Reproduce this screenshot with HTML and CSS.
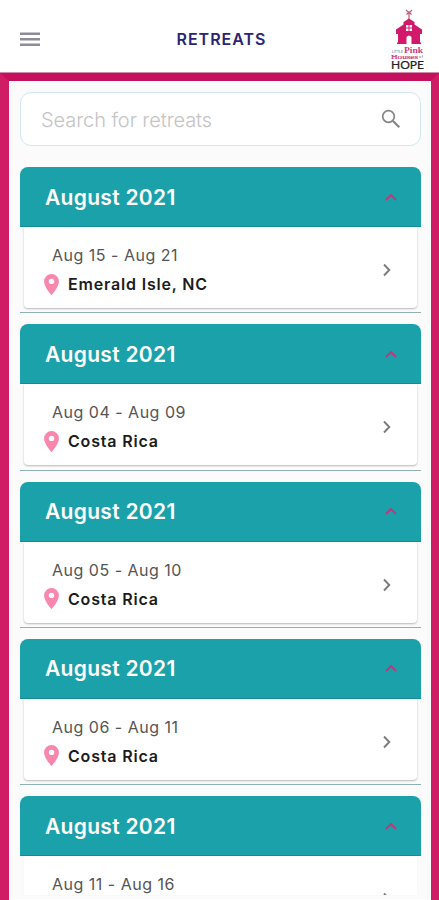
FILE: index.html
```html
<!DOCTYPE html>
<html lang="en">
<head>
<meta charset="utf-8">
<title>Retreats</title>
<link rel="stylesheet" href="styles.css">
</head>
<body>
<svg class="defs" width="0" height="0">
  <symbol id="up" viewBox="0 0 12 8"><path d="M1 7 6 2l5 5" fill="none" stroke="#c73378" stroke-width="1.8"/></symbol>
  <symbol id="next" viewBox="0 0 8 14"><path d="m1 1.500 5.300 5.500L1 12.500" fill="none" stroke="#7b7b7b" stroke-width="1.900"/></symbol>
  <symbol id="pin" viewBox="0 0 15 21"><path fill="#f886ad" fill-rule="evenodd" d="M7.500 0A7.400 7.400 0 0 0 .1 7.400C.1 13 7.500 21 7.500 21s7.400-8 7.400-13.600A7.400 7.400 0 0 0 7.500 0Zm0 4.700a2.700 2.700 0 1 1 0 5.400 2.700 2.700 0 0 1 0-5.400Z"/></symbol>
</svg>
<header class="bar">
  <svg class="menu" viewBox="0 0 20 15"><path d="M0 1.700h20M0 7.200h20M0 12.700h20" stroke="#8d8c98" stroke-width="2.600"/></svg>
  <h1 class="title">RETREATS</h1>
  <svg class="logo" viewBox="0 0 36 62">
    <path d="m15 2 3 3 3-3M15.500 6.500 18 4l2.500 2.500M18 4v7" fill="none" stroke="#bf5c83" stroke-width="1.200"/>
    <path fill="#d2196a" fill-rule="evenodd" d="M18 10.500 12.500 14v2.500L5 21.500V26h2v8.500H6V36h9.500v-7q2.500-3 5 0v7H30v-1.500h-1V26h2v-4.500l-7.500-5V14ZM15 17h6v6h-6Z"/>
    <path d="M18 17v6M15 20h6" stroke="#d2196a" stroke-width="1"/>
    <text class="l-small" x="1" y="44.500" textLength="11" lengthAdjust="spacingAndGlyphs">LITTLE</text>
    <text class="l-pink" x="13" y="44.500" textLength="19" lengthAdjust="spacingAndGlyphs">Pink</text>
    <text class="l-houses" x="0" y="50.500" textLength="27" lengthAdjust="spacingAndGlyphs">Houses</text>
    <text class="l-small" x="28" y="50" textLength="4">of</text>
    <text class="l-hope" x="0" y="60.500" textLength="33" lengthAdjust="spacingAndGlyphs">HOPE</text>
  </svg>
</header>
<main class="frame">
  <div class="search"><span>Search for retreats</span>
    <svg viewBox="0 0 20 20"><circle cx="7.500" cy="7.500" r="5.800" fill="none" stroke="#858585" stroke-width="1.700"/><path d="m12 12 6.300 6.300" stroke="#858585" stroke-width="2.100"/></svg>
  </div>
  <section class="group">
    <h2 class="month"><span>August 2021</span><svg class="up"><use href="#up"/></svg></h2>
    <div class="card"><div><p class="dates">Aug 15 - Aug 21</p><p class="place"><svg class="pin"><use href="#pin"/></svg><span>Emerald Isle, NC</span></p></div><svg class="next"><use href="#next"/></svg></div>
  </section>
  <section class="group">
    <h2 class="month"><span>August 2021</span><svg class="up"><use href="#up"/></svg></h2>
    <div class="card"><div><p class="dates">Aug 04 - Aug 09</p><p class="place"><svg class="pin"><use href="#pin"/></svg><span>Costa Rica</span></p></div><svg class="next"><use href="#next"/></svg></div>
  </section>
  <section class="group">
    <h2 class="month"><span>August 2021</span><svg class="up"><use href="#up"/></svg></h2>
    <div class="card"><div><p class="dates">Aug 05 - Aug 10</p><p class="place"><svg class="pin"><use href="#pin"/></svg><span>Costa Rica</span></p></div><svg class="next"><use href="#next"/></svg></div>
  </section>
  <section class="group">
    <h2 class="month"><span>August 2021</span><svg class="up"><use href="#up"/></svg></h2>
    <div class="card"><div><p class="dates">Aug 06 - Aug 11</p><p class="place"><svg class="pin"><use href="#pin"/></svg><span>Costa Rica</span></p></div><svg class="next"><use href="#next"/></svg></div>
  </section>
  <section class="group last">
    <h2 class="month"><span>August 2021</span><svg class="up"><use href="#up"/></svg></h2>
    <div class="card"><div><p class="dates">Aug 11 - Aug 16</p></div><svg class="next"><use href="#next"/></svg></div>
  </section>
</main>
</body>
</html>
```
FILE: styles.css
```css
* { box-sizing: border-box; margin: 0; }
body { height: 900px; overflow: hidden; display: flex; flex-direction: column; background: #fff; font-family: Inter, "Liberation Sans", sans-serif; }
.defs { position: absolute; }
.bar { height: 73px; flex: none; display: flex; justify-content: space-between; padding: 8px 12px 0 20px; }
.menu { width: 20px; height: 15px; margin: 23.500px 12px 0 0; }
.title { font-size: 16px; line-height: 20px; font-weight: 600; letter-spacing: 1px; color: #2b2473; margin-top: 21px; }
.logo { width: 36px; height: 62px; }
.l-small { font-size: 3.500px; fill: #555; }
.l-pink { font: bold 8.500px "Liberation Serif", serif; fill: #d2397b; }
.l-houses { font: 6px "Liberation Serif", serif; fill: #d2397b; stroke: #d2397b; stroke-width: .2px; }
.l-hope { font: 11px Lato, sans-serif; fill: #222; stroke: #222; stroke-width: .2px; }
.frame { flex: 1; min-height: 0; overflow: hidden; border: solid #cf1c65; border-width: 8px 8px 0 9px; background: #fafbfa; padding: 11px 10.500px 0 11px; box-shadow: inset 0 0 0 1px #fff, 0 -1px #d18aab; }
.frame { border-top-color: #c5115d; }
.search { height: 54px; border: 1px solid #d3e7ef; border-radius: 11px; background: #fff; display: flex; align-items: center; justify-content: space-between; padding: 2px 19px 0 20px; font-size: 20px; font-weight: 300; letter-spacing: -.05px; color: #c4c4c4; }
.search svg { width: 20px; height: 20px; margin-bottom: 2px; }
.group { height: 146.250px; margin-bottom: 11px; border-bottom: 1.500px solid #8fb1b0; }
.search + .group { margin-top: 21px; }
.month { height: 60px; border-radius: 8px 8px 0 0; background: #1ba1aa; border-bottom: 1px solid #128e98; display: flex; align-items: center; justify-content: space-between; padding: 1px 23.500px 0 25px; color: #fff; font-size: 21px; font-weight: 600; letter-spacing: .3px; }
.up { width: 12px; height: 8px; margin-bottom: 1px; }
.card { height: 81px; margin: 0 4px; background: #fff; border-radius: 0 0 4px 4px; box-shadow: 0 1px 2px #0004; display: flex; justify-content: space-between; padding: 17px 25.500px 0 20px; }
.dates { font-size: 16px; line-height: 22px; font-weight: 400; letter-spacing: .5px; color: #555; padding-left: 8px; }
.place { display: flex; align-items: center; gap: 9px; margin-top: 7px; font-size: 16px; line-height: 22px; font-weight: 600; letter-spacing: .820px; color: #1c1c1c; }
.pin { width: 15px; height: 21px; }
.next { width: 8px; height: 14px; margin-top: 19px; flex: none; }
.last { height: 104px; border: 0; }
.last .card { height: 39px; overflow: hidden; border-radius: 0; box-shadow: 0 0 1px #0001; }
```
